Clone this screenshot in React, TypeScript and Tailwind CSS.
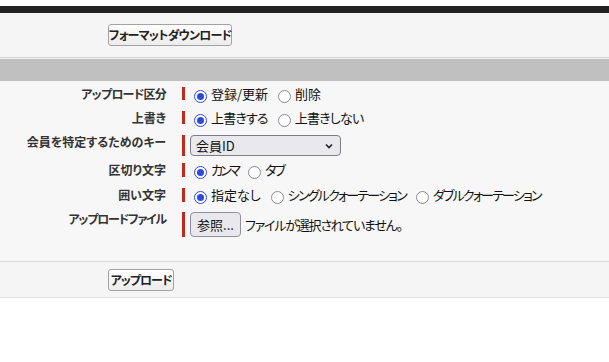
import type { ReactNode } from "react";

type Choice = { label: string; checked?: boolean; tight?: string };

const font = "font-['Noto_Sans_CJK_JP','Noto_Sans',sans-serif] [font-feature-settings:'palt']";

function Radio({ checked }: { checked?: boolean }) {
  return checked ? (
    <span className="mt-[3px] flex h-[13px] w-[13px] shrink-0 items-center justify-center rounded-full border border-[#3049dc] bg-white">
      <span className="h-[7px] w-[7px] rounded-full bg-[#3049dc]" />
    </span>
  ) : (
    <span className="mt-[3px] h-[13px] w-[13px] shrink-0 rounded-full border border-[#8a8a96] bg-white" />
  );
}

function RadioGroup({ choices }: { choices: Choice[] }) {
  return (
    <div className="flex items-start pl-[9px]">
      {choices.map((choice, index) => (
        <label key={choice.label} className={`flex items-start gap-[4px] ${index > 0 ? "ml-[10px]" : ""}`}>
          <Radio checked={choice.checked} />
          <span className={`whitespace-nowrap text-[13px] leading-[13px] text-[#111] ${choice.tight ?? ""}`}>{choice.label}</span>
        </label>
      ))}
    </div>
  );
}

function Row({
  label,
  labelTight,
  height,
  barHeight,
  children,
}: {
  label: string;
  labelTight?: string;
  height: string;
  barHeight: string;
  children: ReactNode;
}) {
  return (
    <div className={`flex items-start ${height}`}>
      <div className={`w-[166px] whitespace-nowrap text-right text-[12px] leading-[13px] font-bold text-[#333] ${labelTight ?? ""}`}>
        {label}
      </div>
      <div className={`ml-[16px] flex items-start border-l-[3px] border-[#bf2a1c] ${barHeight}`}>{children}</div>
    </div>
  );
}

function GrayButton({ children, width, tight }: { children: ReactNode; width: string; tight: string }) {
  return (
    <button
      type="button"
      className={`flex h-[22px] ${width} items-center justify-center whitespace-nowrap rounded-[3px] border border-[#a3a3a3] bg-gradient-to-b from-white to-[#ececec] text-[12px] font-bold text-[#222] ${tight}`}
    >
      {children}
    </button>
  );
}

export default function App() {
  return (
    <div className={`h-[362px] w-[609px] bg-white ${font}`}>
      <div className="h-[6px]" />
      <div className="h-[7px] bg-[#222]" />
      <div className="h-[44px] bg-[#f5f5f5] pl-[108px] pt-[11px]">
        <GrayButton width="w-[124px]" tight="tracking-[-0.8px]">
          フォーマットダウンロード
        </GrayButton>
      </div>
      <div className="h-px bg-[#d6d6d6]" />
      <div className="h-px bg-[#f0f0f0]" />
      <div className="h-[22px] bg-[#c0c0c0]" />

      <div className="h-[180px] bg-[#f7f7f7] pt-[6px]">
        <Row label="アップロード区分" labelTight="tracking-[-0.75px]" height="h-[24px]" barHeight="h-[13px]">
          <RadioGroup choices={[{ label: "登録/更新", checked: true }, { label: "削除" }]} />
        </Row>
        <Row label="上書き" height="h-[24px]" barHeight="h-[13px]">
          <RadioGroup
            choices={[
              { label: "上書きする", checked: true, tight: "tracking-[-0.8px]" },
              { label: "上書きしない", tight: "tracking-[-0.8px]" },
            ]}
          />
        </Row>
        <Row label="会員を特定するためのキー" height="h-[28px]" barHeight="h-[21px]">
          <div className="ml-[5px] flex h-[21px] w-[151px] items-center justify-between rounded-[4px] border border-[#7d7d86] bg-[#e9e9ed] pl-[5px] pr-[7px]">
            <span className="text-[13px] leading-[13px] text-[#111]">会員ID</span>
            <svg width="8" height="6" viewBox="0 0 8 6">
              <path d="M1 1.5 L4 4.5 L7 1.5" fill="none" stroke="#222" strokeWidth="1.6" />
            </svg>
          </div>
        </Row>
        <Row label="区切り文字" height="h-[25px]" barHeight="h-[14px]">
          <RadioGroup
            choices={[
              { label: "カンマ", checked: true, tight: "tracking-[-2.7px]" },
              { label: "タブ", tight: "tracking-[-2px]" },
            ]}
          />
        </Row>
        <Row label="囲い文字" height="h-[24px]" barHeight="h-[14px]">
          <RadioGroup
            choices={[
              { label: "指定なし", checked: true },
              { label: "シングルクォーテーション", tight: "tracking-[-1.8px]" },
              { label: "ダブルクォーテーション", tight: "tracking-[-1.8px]" },
            ]}
          />
        </Row>
        <Row label="アップロードファイル" labelTight="tracking-[-1.2px]" height="h-[49px]" barHeight="h-[25px]">
          <div className="ml-[5px] flex items-center">
            <span className="flex h-[25px] w-[51px] items-center justify-center rounded-[4px] border border-[#8f8f9d] bg-[#e9e9ed] text-[13px] text-[#111]">
              参照...
            </span>
            <span className="ml-[4px] whitespace-nowrap text-[13px] tracking-[-1.2px] text-[#111]">ファイルが選択されていません。</span>
          </div>
        </Row>
      </div>

      <div className="h-px bg-[#d9d9d9]" />
      <div className="h-[35px] bg-[#f5f5f5] pl-[108px] pt-[7px]">
        <GrayButton width="w-[66px]" tight="tracking-[-1px]">
          アップロード
        </GrayButton>
      </div>
      <div className="h-px bg-[#e3e3e3]" />
    </div>
  );
}
